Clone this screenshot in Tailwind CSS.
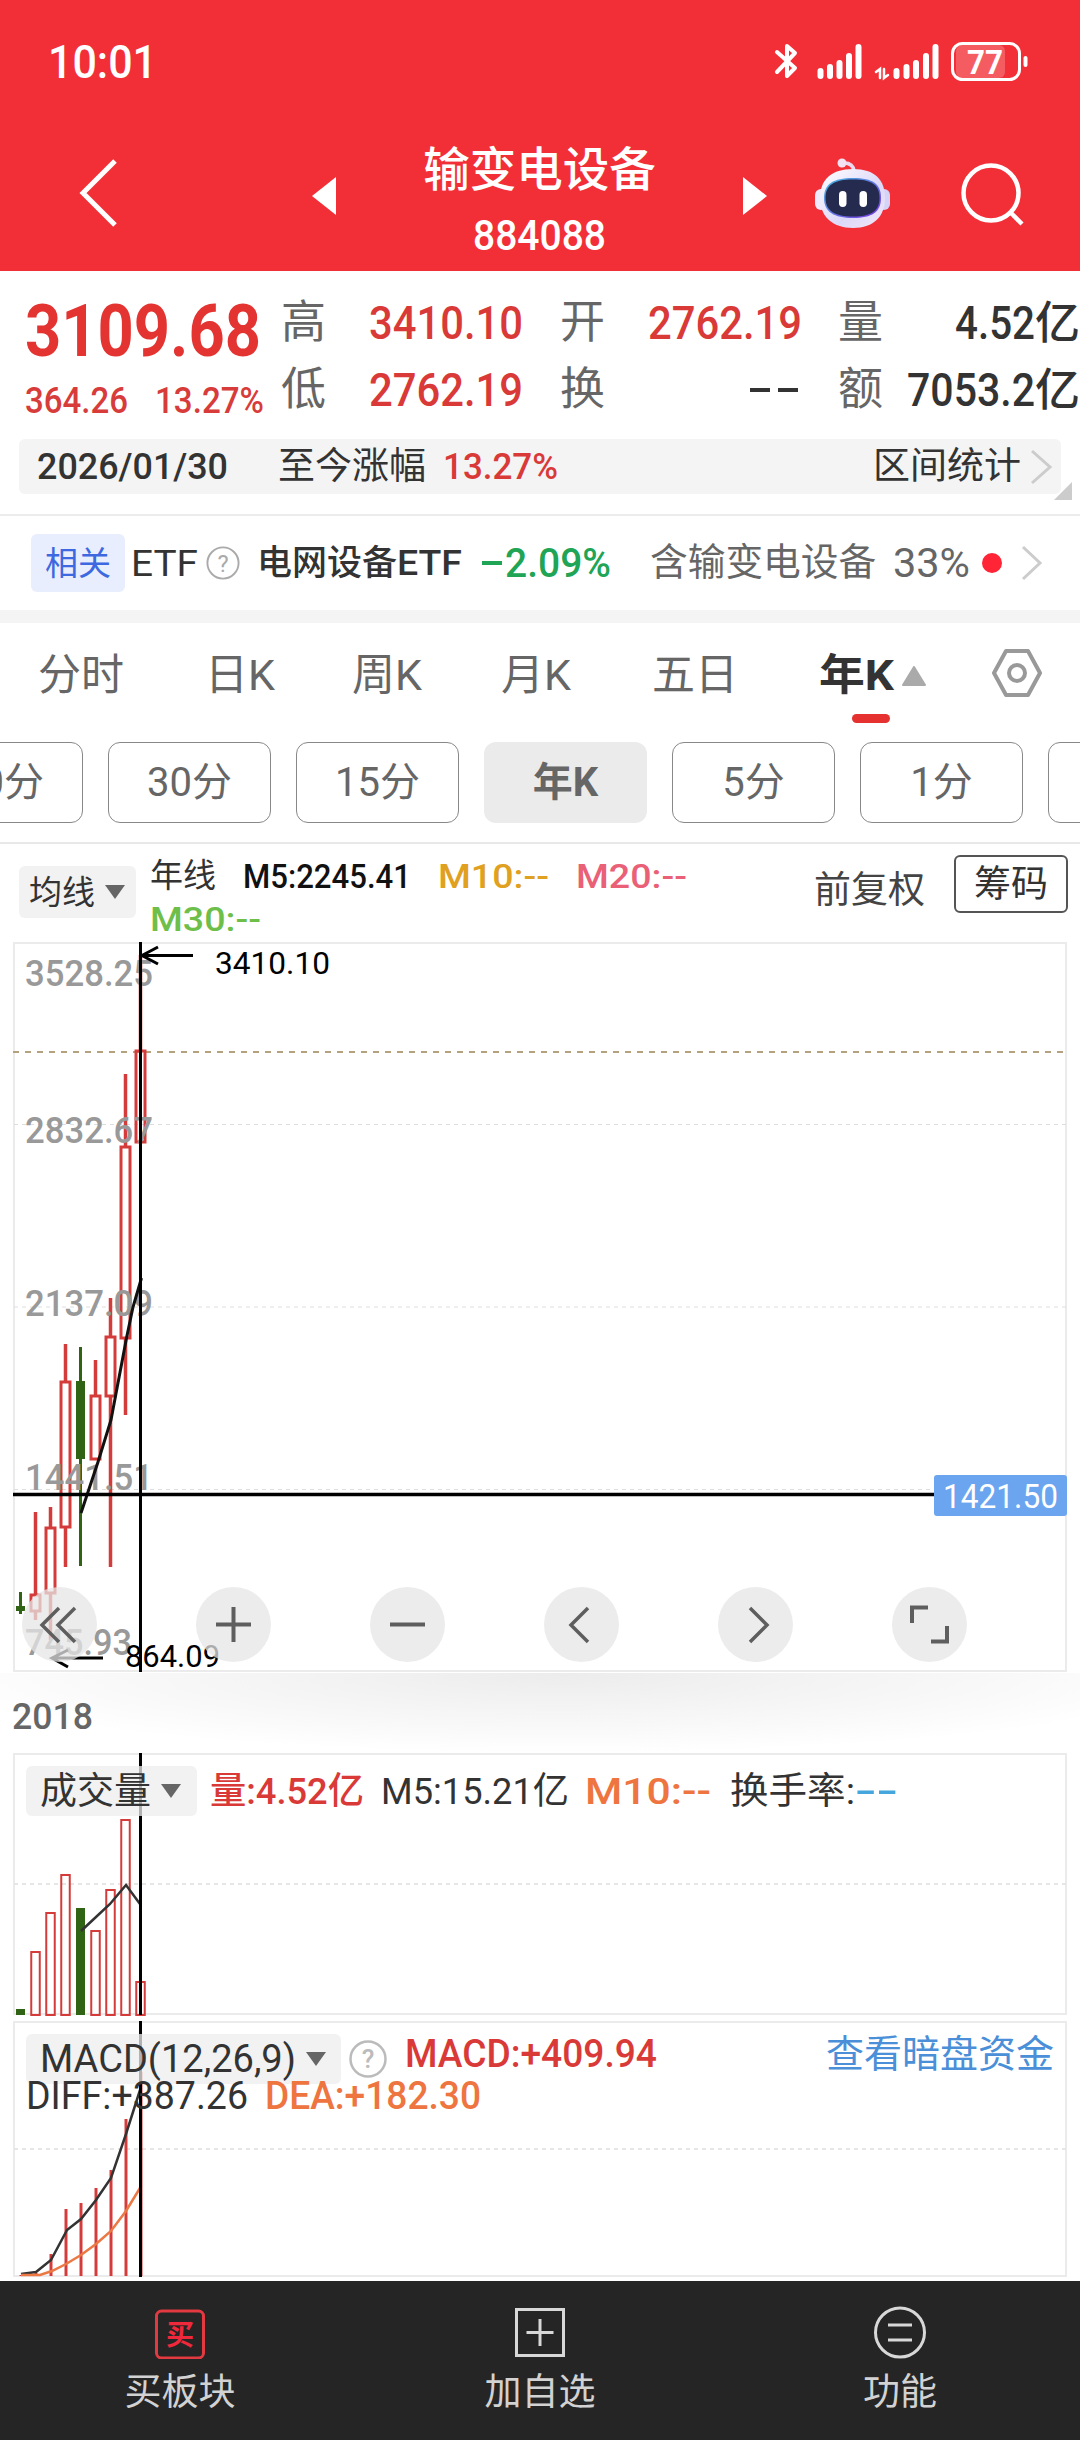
<!DOCTYPE html>
<html lang="zh-CN">

<head>
    <meta charset="UTF-8">
    <meta name="viewport" content="width=device-width, initial-scale=1.0">
    <title>输变电设备 884088</title>
    <script src="https://cdn.jsdelivr.net/npm/@tailwindcss/browser@4"></script>
</head>

<body class="w-[1080px] h-[2440px] overflow-hidden bg-white text-[#333] leading-none whitespace-nowrap font-['Roboto','Noto_Sans_CJK_SC',sans-serif]">

    <!-- HEADER -->
    <header class="h-[271px] bg-[#f22f37] text-white">
        <div class="h-[122px] flex items-center justify-between pl-12 pr-[50px]">
            <span class="text-[47px] font-medium" data-w="109">10:01</span>
            <svg class="w-[256px] h-11" viewBox="774 38 256 44" fill="none" stroke="#fff" stroke-linecap="round">
                <path stroke-width="4" stroke-linejoin="round" d="M777 51L795 67L787 75V45L795 52L777 71" />
                <path stroke-width="6" d="M820.500 70v5M830 66v9M839.500 62v13M849 55v20M858.500 46v29" />
                <path stroke-width="2.500" d="M876 71l4-3v9M884 68v9l4-3" />
                <path stroke-width="6" d="M896.500 70v5M906.500 66v9M916 62v13M926 55v20M935.500 46v29" />
                <rect x="956" y="44" width="49" height="33" rx="6" fill="#fff" fill-opacity=".22" stroke="none" />
                <rect x="952.500" y="42.500" width="67" height="36" rx="10" stroke-width="3" />
                <path stroke-width="4" d="M1025.500 57v7" />
                <text x="967" y="73" font-size="33" font-weight="700" fill="#fff" stroke="none" textLength="36" lengthAdjust="spacingAndGlyphs">77</text>
            </svg>
        </div>
        <div class="h-[148px] flex items-center">
            <svg class="ml-[78px] w-[42px] h-[72px] mb-1.5" viewBox="0 0 42 72" fill="none" stroke="#fff" stroke-width="5"><path d="M37 4L5 36L37 68" /></svg>
            <svg class="ml-[192px] w-6 h-[38px]" viewBox="0 0 24 38" fill="#fff"><path d="M24 0V38L0 19Z" /></svg>
            <div class="w-[407px] flex flex-col items-center gap-[20px] mt-3">
                <h1 class="text-[46.500px] font-medium">输变电设备</h1>
                <span class="text-[43px] font-medium" data-w="133">884088</span>
            </div>
            <svg class="w-6 h-[38px]" viewBox="0 0 24 38" fill="#fff"><path d="M0 0V38L24 19Z" /></svg>
            <!-- robot -->
            <svg class="ml-[47px] w-[77px] h-[72px] mb-1.5" viewBox="0 0 77 72">
                <defs>
                    <linearGradient id="head" x1="0" y1="0" x2="1" y2="1">
                        <stop offset="0" stop-color="#fff" />
                        <stop offset=".6" stop-color="#dcd8f8" />
                        <stop offset="1" stop-color="#f3e8f8" />
                    </linearGradient>
                    <linearGradient id="face" x1="0" y1="0" x2="1" y2="1">
                        <stop offset="0" stop-color="#49b8e0" />
                        <stop offset="1" stop-color="#7a35e0" />
                    </linearGradient>
                </defs>
                <rect x="1" y="32" width="12" height="21" rx="6" fill="#eee9fc" />
                <rect x="64" y="32" width="12" height="21" rx="6" fill="#d5d2f8" />
                <path d="M28 6Q39 5 40 14" fill="none" stroke="#ecd9ef" stroke-width="3.500" />
                <circle cx="28" cy="6" r="4.500" fill="#f3e0f2" />
                <path d="M39 12C61 12 71 23 71 41S60 71 39 71S6 59 6 41S17 12 39 12Z" fill="url(#head)" />
                <path d="M39 21C59 21 67 27 67 41S58 61 39 61S10 55 10 41S19 21 39 21Z" fill="url(#face)" />
                <path d="M39 22.500C58 22.500 65.500 28 65.500 41S57 59.500 39 59.500S11.500 54 11.500 41S20 22.500 39 22.500Z" fill="#242b4f" />
                <rect x="25" y="34" width="7.500" height="16" rx="3.700" fill="#fff" />
                <rect x="45.500" y="34" width="7.500" height="16" rx="3.700" fill="#fff" />
            </svg>
            <svg class="ml-[69px] w-16 h-16 mb-0.5" viewBox="0 0 64 64" fill="none" stroke="#fff" stroke-width="4.500"><circle cx="31" cy="30" r="27.500" /><path d="M50 49L62 61" /></svg>
        </div>
    </header>

    <!-- QUOTE -->
    <section class="h-[245px] border-b-2 border-[#ececec] relative">
        <div class="flex h-[168px]">
            <div class="w-[281px] pl-[25px] pt-[24px] text-[#e43431]">
                <div class="text-[73px] font-bold"><span data-w="236">3109.68</span></div>
                <div class="flex text-[37px] font-medium pt-3.5 gap-[27px] text-[#d73c3a]"><span data-w="103">364.26</span><span data-w="109">13.27%</span></div>
            </div>
            <div class="grid grid-cols-[45px_197px_82px_197px_81px_197px] auto-rows-[67px] items-center pt-[18px] text-[47px] font-medium text-[#d93a38]">
                <span class="text-[45px] font-normal text-[#666]">高</span>
                <span class="text-right"><span data-w="154">3410.10</span></span>
                <span class="text-[45px] font-normal text-[#666] pl-[37px]">开</span>
                <span class="text-right"><span data-w="154">2762.19</span></span>
                <span class="text-[45px] font-normal text-[#666] pl-[36px]">量</span>
                <span class="text-right text-[#333]"><span data-w="80">4.52</span><span class="text-[45px]">亿</span></span>
                <span class="text-[45px] font-normal text-[#666]">低</span>
                <span class="text-right"><span data-w="154">2762.19</span></span>
                <span class="text-[45px] font-normal text-[#666] pl-[37px]">换</span>
                <span class="flex justify-end gap-2 pr-1"><i class="w-5 h-1 bg-[#333]"></i><i class="w-5 h-1 bg-[#333]"></i></span>
                <span class="text-[45px] font-normal text-[#666] pl-[36px]">额</span>
                <span class="text-right text-[#333]"><span data-w="128">7053.2</span><span class="text-[45px]">亿</span></span>
            </div>
        </div>
        <div class="mx-[19px] h-[55px] rounded-md bg-[#f4f4f4] flex items-center pl-[18px] pr-2 text-[37px]">
            <span class="font-medium" data-w="191">2026/01/30</span>
            <span class="ml-[50px]">至今涨幅</span>
            <span class="ml-[17px] font-medium text-[#d93a38]" data-w="115">13.27%</span>
            <span class="ml-auto">区间统计</span>
            <svg class="ml-2 w-6 h-9" viewBox="0 0 24 36" fill="none" stroke="#ccc" stroke-width="3"><path d="M3 2L21 18L3 34" /></svg>
        </div>
        <svg class="absolute right-2 bottom-3.5 w-[18px] h-[18px]" viewBox="0 0 18 18" fill="#ccc"><path d="M18 0V18H0Z" /></svg>
    </section>

    <!-- RELATED ETF -->
    <section class="h-[94px] flex items-center pl-[31px] text-[37px]">
        <span class="w-[94px] h-[58px] rounded-md bg-[#e8eefe] text-[#3d68e0] text-[33px] flex items-center justify-center">相关</span>
        <span class="ml-1.5" data-w="67">ETF</span>
        <svg class="ml-2 w-[34px] h-[34px]" viewBox="0 0 36 36" fill="none"><circle cx="18" cy="18" r="16.500" stroke="#aaa" stroke-width="2" /><text x="18" y="27" text-anchor="middle" font-size="25" fill="#aaa">?</text></svg>
        <span class="ml-[17px] text-[35px] font-medium flex items-center">电网设备<span data-w="65">ETF</span></span>
        <span class="ml-[20px] text-[41px] font-medium text-[#20a455] flex items-center gap-[3px]"><i class="w-5 h-1 bg-[#20a455]"></i><span data-w="106">2.09%</span></span>
        <span class="ml-[39px] text-[37.700px] text-[#666]">含输变电设备</span>
        <span class="ml-[17px] text-[41px] text-[#666]" data-w="77">33%</span>
        <i class="ml-[12px] w-5 h-5 rounded-full bg-[#ff2436]"></i>
        <svg class="ml-[18px] w-6 h-9" viewBox="0 0 24 36" fill="none" stroke="#ccc" stroke-width="3"><path d="M3 2L20 18L3 34" /></svg>
    </section>
    <div class="h-[13px] bg-[#f4f4f4]"></div>

    <!-- PERIOD TABS -->
    <nav class="h-[119px] flex text-[43px] text-[#666] pt-[31px] pl-[38px]">
        <span class="w-[167px]">分时</span>
        <span class="w-[147px]">日K</span>
        <span class="w-[149px]">周K</span>
        <span class="w-[151px]">月K</span>
        <span class="w-[167px]">五日</span>
        <div class="w-[172px] text-[#333] font-bold">
            <div class="flex items-center gap-2"><span data-w="75">年K</span><svg class="w-6 h-5" viewBox="0 0 24 20" fill="#aaa" stroke="#aaa" stroke-width="2" stroke-linejoin="round"><path d="M12 1L23 19H1Z" /></svg></div>
            <div class="ml-[33px] mt-[17px] w-[38px] h-[9px] rounded-full bg-[#e53230]"></div>
        </div>
        <svg class="w-[52px] h-[50px] -mt-[6px]" viewBox="0 0 52 50" fill="none" stroke="#999" stroke-width="4"><path stroke-linejoin="round" d="M15 3H37L49 25L37 47H15L3 25Z" /><circle cx="26" cy="25" r="8" /></svg>
    </nav>
    <div class="h-[102px] flex gap-[25px] -ml-20 text-[40px] text-[#666] border-b-2 border-[#e8e8e8]">
        <span class="shrink-0 w-[163px] h-[81px] rounded-xl border border-[#888] flex items-center justify-center">60分</span>
        <span class="shrink-0 w-[163px] h-[81px] rounded-xl border border-[#888] flex items-center justify-center">30分</span>
        <span class="shrink-0 w-[163px] h-[81px] rounded-xl border border-[#888] flex items-center justify-center">15分</span>
        <span class="shrink-0 w-[163px] h-[81px] rounded-xl bg-[#ebebeb] font-bold flex items-center justify-center">年K</span>
        <span class="shrink-0 w-[163px] h-[81px] rounded-xl border border-[#888] flex items-center justify-center">5分</span>
        <span class="shrink-0 w-[163px] h-[81px] rounded-xl border border-[#888] flex items-center justify-center">1分</span>
        <span class="shrink-0 w-[163px] h-[81px] rounded-xl border border-[#888]"></span>
    </div>

    <!-- MA LEGEND -->
    <section class="h-[98px] flex pl-[19px] text-[34px]">
        <div class="shrink-0 mt-[22px] w-[117px] h-[52px] rounded-md bg-[#f2f2f2] flex items-center gap-2.5 pl-2.5 text-[33px]">均线<svg class="w-5 h-3.5" viewBox="0 0 20 14" fill="#666"><path d="M0 0H20L10 14Z" /></svg></div>
        <div class="ml-3.5 pt-[15px] w-[664px] shrink-0">
            <div class="flex gap-[27px] h-[43px]">
                <span class="text-[33px]">年线</span>
                <span class="font-medium text-[#111]" data-w="168">M5:2245.41</span>
                <span class="font-medium text-[#e0a020]" data-w="111">M10:--</span>
                <span class="font-medium text-[#ea6076]" data-w="111">M20:--</span>
            </div>
            <span class="font-medium text-[#6ebe4a]" data-w="111">M30:--</span>
        </div>
        <span class="mt-[28px] text-[37px] text-[#444] shrink-0">前复权</span>
        <div class="ml-[29px] shrink-0 mt-[11px] w-[114px] h-[58px] rounded-md border-2 border-[#555] flex items-center justify-center text-[37px]">筹码</div>
    </section>

    <!-- K LINE -->
    <section class="relative h-[731px]">
        <svg class="w-[1080px] h-[731px]" viewBox="0 942 1080 731" fill="none">
            <rect x="14" y="943" width="1052" height="728" stroke="#ebebeb" stroke-width="2" />
            <path stroke="#dedede" stroke-dasharray="4 4" d="M14 1124.500H1066M14 1307H1066M14 1489.500H1066" />
            <path stroke="#b5a27c" stroke-width="2" stroke-dasharray="6 6" d="M13 1052H1066" />
            <g id="candles"></g>
            <g font-size="37" font-weight="500" fill="#999">
                <text x="25" y="986" textLength="128" lengthAdjust="spacingAndGlyphs">3528.25</text>
                <text x="25" y="1143" textLength="128" lengthAdjust="spacingAndGlyphs">2832.67</text>
                <text x="25" y="1316" textLength="128" lengthAdjust="spacingAndGlyphs">2137.09</text>
                <text x="25" y="1490" textLength="128" lengthAdjust="spacingAndGlyphs">1441.51</text>
                <text x="25" y="1655" textLength="107" lengthAdjust="spacingAndGlyphs">745.93</text>
            </g>
            <path stroke="#111" stroke-width="3" d="M81 1513L98 1462L111 1420L126.500 1338L133 1307L141.500 1278" />
            <path stroke="#000" stroke-width="3" d="M140.500 942V1672M193 955.500H142M158 947L142 955.500L158 964M103 1658H52M68 1650L52 1658L68 1667" />
            <path stroke="#000" stroke-width="3.500" d="M13 1494.500H935" />
            <g font-size="32" fill="#000">
                <text x="215" y="974" textLength="115" lengthAdjust="spacingAndGlyphs">3410.10</text>
                <text x="125" y="1667" textLength="95" lengthAdjust="spacingAndGlyphs">864.09</text>
            </g>
            <rect x="934" y="1475" width="133" height="41" rx="3" fill="#6ba5ef" />
            <text x="943" y="1508" font-size="33" fill="#fff" textLength="115" lengthAdjust="spacingAndGlyphs">1421.50</text>
        </svg>
        <div class="absolute left-[22px] bottom-[11px] flex gap-[99px]">
            <svg class="w-[75px] h-[75px] rounded-full bg-[#e6e6e6]/75" viewBox="0 0 75 75" fill="none" stroke="#5e5e5e" stroke-width="3.500"><path d="M37 21L20 38L37 55M53 21L36 38L53 55" /></svg>
            <svg class="w-[75px] h-[75px] rounded-full bg-[#e6e6e6]/75" viewBox="0 0 75 75" fill="none" stroke="#5e5e5e" stroke-width="4"><path d="M37.500 20V55M20 37.500H55" /></svg>
            <svg class="w-[75px] h-[75px] rounded-full bg-[#e6e6e6]/75" viewBox="0 0 75 75" fill="none" stroke="#5e5e5e" stroke-width="4"><path d="M20 37.500H55" /></svg>
            <svg class="w-[75px] h-[75px] rounded-full bg-[#e6e6e6]/75" viewBox="0 0 75 75" fill="none" stroke="#5e5e5e" stroke-width="3.500"><path d="M44 21L27 38L44 55" /></svg>
            <svg class="w-[75px] h-[75px] rounded-full bg-[#e6e6e6]/75" viewBox="0 0 75 75" fill="none" stroke="#5e5e5e" stroke-width="3.500"><path d="M32 21L49 38L32 55" /></svg>
            <svg class="w-[75px] h-[75px] rounded-full bg-[#e6e6e6]/75" viewBox="0 0 75 75" fill="none" stroke="#5e5e5e" stroke-width="4"><path d="M36 20.500H20V36M39 54.500H55V39" /></svg>
        </div>
    </section>
    <div class="h-[80px] pl-3 pt-[26px] bg-[radial-gradient(ellipse_60%_100%_at_52%_0%,#ececec,#f8f8f8_65%,#fff)] text-[36px] font-medium text-[#666]"><span data-w="81">2018</span></div>

    <!-- VOLUME -->
    <section class="relative h-[268px]">
        <svg class="absolute inset-0 w-[1080px] h-[268px]" viewBox="0 1753 1080 268" fill="none">
            <rect x="14" y="1754" width="1052" height="260" stroke="#ebebeb" stroke-width="2" fill="#fff" />
            <path stroke="#e6e6e6" stroke-width="2" stroke-dasharray="4 4" d="M14 1884H1066" />
            <g id="volumes"></g>
            <path stroke="#333" stroke-width="2.500" d="M81 1931L96 1917L110 1904L126 1885L140 1904" />
            <path stroke="#000" stroke-width="3" d="M140.500 1753V2015" />
        </svg>
        <div class="relative flex items-center pt-[13px] pl-[26px] text-[37px]">
            <span class="w-[171px] h-[50px] rounded-md bg-[#ededed]/75 flex items-center gap-2.5 pl-3.5">成交量<svg class="w-5 h-3.5" viewBox="0 0 20 14" fill="#666"><path d="M0 0H20L10 14Z" /></svg></span>
            <span class="ml-[13px] font-medium text-[#d93a38]" data-w="154">量:4.52亿</span>
            <span class="ml-[17px]" data-w="188">M5:15.21亿</span>
            <span class="ml-[16px] font-medium text-[#ee7440]" data-w="126">M10:--</span>
            <span class="ml-[19px]" data-w="125">换手率:</span>
            <span class="font-medium text-[#45a5dd]" data-w="43">--</span>
        </div>
    </section>

    <!-- MACD -->
    <section class="relative h-[260px]">
        <svg class="absolute inset-0 w-[1080px] h-[260px]" viewBox="0 2021 1080 260" fill="none">
            <rect x="14" y="2022" width="1052" height="254" stroke="#ebebeb" stroke-width="2" />
            <path stroke="#e6e6e6" stroke-width="2" stroke-dasharray="4 4" d="M14 2149H1066" />
            <g id="macd"></g>
            <path stroke="#333" stroke-width="2.500" d="M21 2274L36 2272L51 2260L67 2230L81 2219L96 2200L111 2178L126 2134L140 2090" />
            <path stroke="#ec7843" stroke-width="2.500" d="M21 2275H40L52 2271L66 2264L81 2255L96 2244L111 2231L126 2211L140 2188" />
            <path stroke="#000" stroke-width="3" d="M140.500 2021V2277" />
        </svg>
        <div class="relative flex items-center pt-[13px] pl-[26px] text-[38px]">
            <span class="w-[315px] h-[50px] rounded-md bg-[#ededed]/75 flex items-center gap-2.5 pl-3.5"><span data-w="256">MACD(12,26,9)</span><svg class="w-5 h-3.5" viewBox="0 0 20 14" fill="#666"><path d="M0 0H20L10 14Z" /></svg></span>
            <svg class="ml-2 w-[38px] h-[38px]" viewBox="0 0 38 38" fill="none"><circle cx="19" cy="19" r="17.500" stroke="#bbb" stroke-width="2.500" /><text x="19" y="28" text-anchor="middle" font-size="26" font-weight="500" fill="#bbb">?</text></svg>
            <span class="ml-[18px] mb-2.5 font-medium text-[#d93a38]" data-w="252">MACD:+409.94</span>
            <span class="ml-auto mr-[26px] mb-2.5 text-[38px] text-[#4a8fd8]">查看暗盘资金</span>
        </div>
        <div class="relative flex gap-[17px] pl-[26px] -mt-[7px] text-[38px]">
            <span data-w="222">DIFF:+387.26</span>
            <span class="font-medium text-[#ee7440]" data-w="216">DEA:+182.30</span>
        </div>
    </section>

    <!-- BOTTOM BAR -->
    <footer class="h-[159px] bg-[#252525] text-[#d2d2d2] text-[37px] grid grid-cols-3 justify-items-center pt-[24px]">
        <div class="flex flex-col items-center gap-[15px]">
            <svg class="w-[54px] h-[54px]" viewBox="0 0 54 54" fill="none"><rect x="3.500" y="6" width="47" height="47" rx="5" stroke="#e23a40" stroke-width="3" /><text x="27" y="40" text-anchor="middle" font-size="28" font-weight="700" fill="#f0283c">买</text></svg>
            <span>买板块</span>
        </div>
        <div class="flex flex-col items-center gap-[15px]">
            <svg class="w-[54px] h-[54px]" viewBox="0 0 54 54" fill="none" stroke="#d8d8d8" stroke-width="3"><path d="M3.500 4.500H50.500V50.500H3.500ZM27 14V41M13.500 27.500H40.500" /></svg>
            <span>加自选</span>
        </div>
        <div class="flex flex-col items-center gap-[15px]">
            <svg class="w-[54px] h-[54px]" viewBox="0 0 54 54" fill="none" stroke="#d8d8d8" stroke-width="3"><circle cx="27" cy="27.500" r="24.500" /><path d="M15 20H39M15 35H39" /></svg>
            <span>功能</span>
        </div>
    </footer>

    <script>
        function fitFigures() {
            document.querySelectorAll("[data-w]").forEach(el => {
                el.style.transform = "none";
                el.style.width = "auto";
                el.style.display = "inline-block";
                el.style.flexShrink = 0;
                el.style.textAlign = "left";
                const range = document.createRange();
                range.selectNodeContents(el);
                const natural = range.getBoundingClientRect().width;
                el.style.width = el.dataset.w + "px";
                el.style.transformOrigin = "0 50%";
                el.style.transform = `scaleX(${el.dataset.w / natural})`;
            });
        }
        // again when the styles have come in and the header gets its height
        new ResizeObserver(fitFigures).observe(document.querySelector("header"));
        window.addEventListener("load", fitFigures);

        const RED = "#d43c3b", GREEN = "#306414";
        const xs = [20.5, 35.5, 50.5, 65.5, 80.5, 95.5, 110.5, 125.5, 140.5];

        // high, body top, body bottom, low
        const candles = [
            [1592, 1606, 1611, 1614], [1512, 1595, 1611, 1620], [1507, 1528, 1593, 1640],
            [1344, 1382, 1527, 1567], [1347, 1381, 1459, 1566], [1360, 1396, 1459, 1459],
            [1298, 1337, 1396, 1567], [1074, 1147, 1338, 1415], [955, 1051, 1142, 1142],
        ];
        document.getElementById("candles").innerHTML = candles.map(([h, t, b, l], i) => {
            const x = xs[i];
            if (i === 0 || i === 4) {
                return `<path stroke="${GREEN}" stroke-width="3" d="M${x} ${h}V${l}"/><rect x="${x - 4.5}" y="${t}" width="9" height="${b - t}" fill="${GREEN}"/>`;
            }
            return `<path stroke="${RED}" stroke-width="3.5" d="M${x} ${h}V${t}M${x} ${b}V${l}"/><rect x="${x - 4.5}" y="${t}" width="9" height="${b - t}" stroke="${RED}" stroke-width="3"/>`;
        }).join("");

        const volumes = [2009, 1952, 1913, 1875, 1908, 1931, 1890, 1820, 1982];
        document.getElementById("volumes").innerHTML = volumes.map((t, i) => {
            if (i === 0 || i === 4) return `<rect x="${xs[i] - 4.5}" y="${t}" width="9" height="${2015 - t}" fill="${GREEN}"/>`;
            return `<rect x="${xs[i] - 4.25}" y="${t}" width="8.5" height="${2015 - t}" stroke="${RED}" stroke-width="2"/>`;
        }).join("");

        const macd = [2275, 2273, 2254, 2209, 2203, 2188, 2170, 2119, 2072];
        document.getElementById("macd").innerHTML = macd.map((t, i) =>
            `<path stroke="${RED}" stroke-width="3" d="M${xs[i] + .5} ${t}V2276"/>`
        ).join("");
    </script>
</body>

</html>
